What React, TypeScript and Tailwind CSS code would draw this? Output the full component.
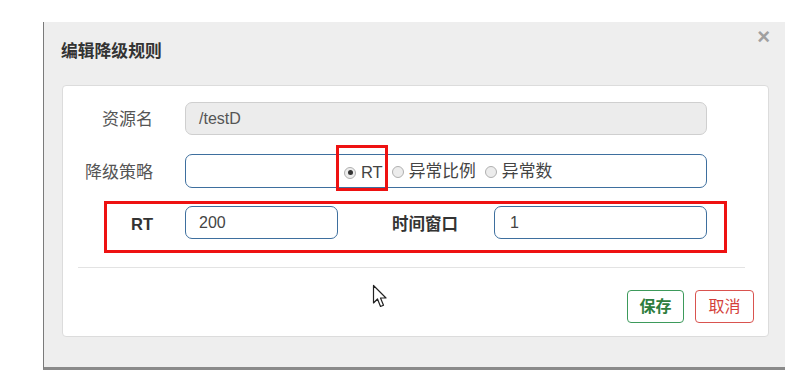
import React from "react";

const font = { fontFamily: '"Liberation Sans", Arial, "Noto Sans CJK SC", sans-serif' };

function Radio({ checked, label, small }: { checked?: boolean; label: string; small?: boolean }) {
  return (
    <span className="flex items-center gap-[5px]">
      <span className="flex h-[12px] w-[12px] items-center justify-center rounded-full border border-[#b0b0b0] bg-[#ececec]">
        {checked && <span className="h-[5px] w-[5px] rounded-full bg-[#333]" />}
      </span>
      <span className={small ? "whitespace-nowrap text-[16.5px] leading-none text-[#444]" : "whitespace-nowrap text-[16.8px] leading-none text-[#444]"}>{label}</span>
    </span>
  );
}

export default function App() {
  return (
    <div className="relative h-[389px] w-[799px] overflow-hidden bg-white" style={font}>
      <div className="pl-[43px] pt-[22px]">
        <div className="relative h-[348px] w-[742px] border-b-[3px] border-l border-b-[#8a8a8a] border-l-[#7a7a7a] bg-[#eeeeee]">
          <div className="flex h-[63px] items-center pl-[17px] pb-[3px]">
            <span className="text-[16.8px] font-bold leading-none text-[#333]">编辑降级规则</span>
          </div>
          <span className="absolute right-[15px] top-[4px] text-[22px] font-bold leading-none text-[#a0a0a0]">×</span>
          <div className="ml-[18px] h-[252px] w-[707px] rounded-[4px] border border-[#dcdcdc] bg-white pt-[16px]">
            <div className="flex h-[33px] items-center">
              <div className="w-[90px] pt-[3px] text-right text-[17px] text-[#555]">资源名</div>
              <div className="ml-[32px] flex h-[33px] w-[522px] items-center rounded-[7px] border border-[#cfcfcf] bg-[#ececec] pl-[13px] text-[16px] text-[#555]">
                /testD
              </div>
            </div>
            <div className="mt-[19px] flex h-[34px] items-center">
              <div className="w-[90px] pt-[3px] text-right text-[17px] text-[#555]">降级策略</div>
              <div className="ml-[32px] flex h-[34px] w-[522px] items-center gap-[9px] rounded-[7px] border border-[#3e6f9e] bg-white pl-[158px] pt-[3px]">
                <Radio checked small label="RT" />
                <Radio label="异常比例" />
                <Radio label="异常数" />
              </div>
            </div>
            <div className="mt-[18px] flex h-[33px] items-center">
              <div className="w-[90px] pt-[3px] text-right text-[16.5px] font-bold text-[#333]">RT</div>
              <div className="ml-[32px] flex h-[33px] w-[153px] items-start rounded-[7px] border border-[#3e6f9e] bg-white pl-[13px] pt-[4px] text-[16px] text-[#444]">
                200
              </div>
              <div className="ml-[54px] w-[70px] whitespace-nowrap pt-[3px] text-[16.5px] font-bold text-[#333]">时间窗口</div>
              <div className="ml-[32px] flex h-[33px] w-[213px] items-start rounded-[7px] border border-[#3e6f9e] bg-white pl-[15px] pt-[4px] text-[16px] text-[#444]">
                1
              </div>
            </div>
            <div className="ml-[15px] mt-[28px] h-px w-[667px] bg-[#e3e3e3]" />
            <div className="mr-[14px] mt-[22px] flex justify-end gap-[11px]">
              <div className="flex h-[33px] w-[57px] items-center justify-center rounded-[4px] border border-[#3d9a5b] text-[16px] font-semibold text-[#2e7d3e]">
                保存
              </div>
              <div className="flex h-[33px] w-[59px] items-center justify-center rounded-[4px] border border-[#d9534f] text-[16px] text-[#d43f3a]">
                取消
              </div>
            </div>
          </div>
        </div>
      </div>
      <div className="pointer-events-none absolute left-[336px] top-[145px] h-[46px] w-[52px] border-[3px] border-[#ee1111]" />
      <div className="pointer-events-none absolute left-[104px] top-[201px] h-[52px] w-[623px] border-[3px] border-[#ee1111]" />
      <svg className="absolute left-[372px] top-[284px]" width="16" height="26" viewBox="0 0 16 26">
        <path d="M1.5 1.5 L1.5 19 L5.5 15 L8.5 22.5 L11.5 21.2 L8.5 14 L14 14 Z" fill="white" stroke="#222" strokeWidth="1.2" strokeLinejoin="round" />
      </svg>
    </div>
  );
}
